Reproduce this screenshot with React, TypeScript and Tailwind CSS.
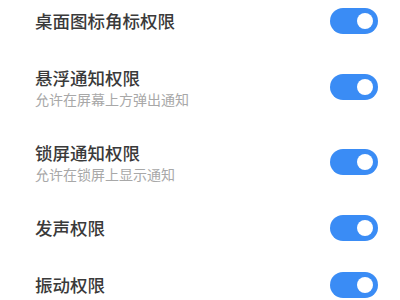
const rows = [
  { title: "桌面图标角标权限" },
  { title: "悬浮通知权限", desc: "允许在屏幕上方弹出通知" },
  { title: "锁屏通知权限", desc: "允许在锁屏上显示通知" },
  { title: "发声权限" },
  { title: "振动权限" },
];

function Toggle() {
  return (
    <div className="w-[48px] h-[26px] rounded-full bg-[#3a8cf5] flex items-center justify-end pr-[5px] shrink-0">
      <div className="w-[16px] h-[16px] rounded-full bg-white" />
    </div>
  );
}

export default function App() {
  return (
    <div
      className="w-[400px] h-[300px] overflow-hidden bg-white"
      style={{ fontFamily: '"Noto Sans CJK SC", "Noto Sans", sans-serif' }}
    >
      <div className="-mt-[8px] flex flex-col">
        {rows.map((r) => (
          <div
            key={r.title}
            className={`flex items-center justify-between pl-[35px] pr-[22px] ${
              r.desc ? "h-[75px]" : "h-[57px]"
            }`}
          >
            <div className="flex flex-col">
              <span className="text-[17.5px] leading-[24px] font-medium text-[#3a3a3a]">
                {r.title}
              </span>
              {r.desc && (
                <span className="text-[14px] leading-[18px] text-[#a8a8a8]">
                  {r.desc}
                </span>
              )}
            </div>
            <Toggle />
          </div>
        ))}
      </div>
    </div>
  );
}
